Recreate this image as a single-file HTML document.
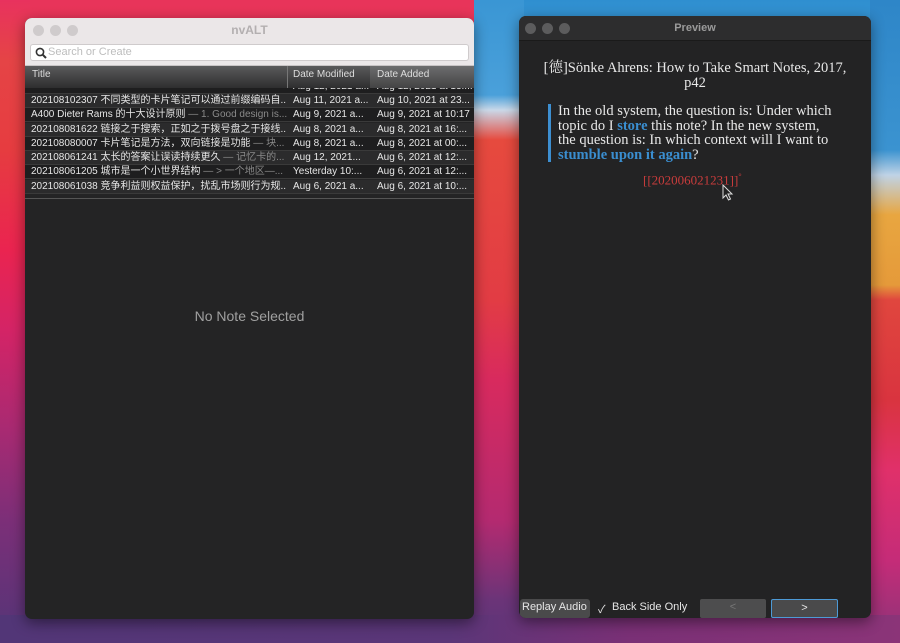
<!DOCTYPE html>
<html><head><meta charset="utf-8"><style>
*{margin:0;padding:0;box-sizing:border-box}
body{width:900px;height:643px;overflow:hidden;position:relative;font-family:"Liberation Sans","Noto Sans CJK SC",sans-serif;background:linear-gradient(180deg,#e8345a 0%,#e53d4a 25%,#e2265a 45%,#b52a6e 65%,#7a3277 82%,#4e3577 100%)}
.bg{position:absolute}
.win{position:absolute;border-radius:7px;overflow:hidden;box-shadow:0 4px 14px rgba(0,0,0,.45)}
.dots span{position:absolute;top:7px;width:11px;height:11px;border-radius:50%}
</style></head><body>
<div class="bg" style="left:474px;top:0;width:426px;height:110px;background:linear-gradient(180deg,#2f8fd0,#4aa3dc)"></div>
<div class="bg" style="left:474px;top:0;width:50px;height:643px;background:linear-gradient(180deg,#3a96d4 0,#4aa0da 95px,#c9d8e8 110px,#e64a3e 140px,#e23c44 300px,#d82a5e 380px,#b42a70 520px,#6b3478 600px,#5a3678 643px)"></div>
<div class="bg" style="left:870px;top:0;width:30px;height:643px;background:linear-gradient(180deg,#2e86c8 0,#3b93d0 150px,#bfd3e6 175px,#e8a640 215px,#e59a3a 285px,#e0463e 300px,#d9343f 400px,#e0306a 470px,#c52c78 560px,#8a3478 643px)"></div>
<div class="bg" style="left:0;top:0;width:30px;height:643px;background:linear-gradient(180deg,#e8325e 0,#e54446 60px,#e63c40 150px,#ea2450 250px,#d42466 330px,#a82a72 430px,#7c2f78 520px,#533577 643px)"></div>
<div class="bg" style="left:0;top:615px;width:900px;height:28px;background:linear-gradient(90deg,#523677,#5b3678 50%,#7a3076 70%,#8b3478)"></div>

<div class="win" style="left:25px;top:18px;width:449px;height:601px;background:#242425">
 <div style="height:48px;background:#ebe7e8;border-bottom:1px solid #c8c4c5;position:relative">
  <div class="dots"><span style="left:8px;background:#cfcbcc"></span><span style="left:25px;background:#cfcbcc"></span><span style="left:42px;background:#cfcbcc"></span></div>
  <div style="position:absolute;top:5px;width:100%;text-align:center;font-size:12px;font-weight:bold;color:#b3afb0">nvALT</div>
  <div style="position:absolute;left:5px;top:26px;width:439px;height:17px;background:#fff;border:1px solid #cfcbcc;border-radius:3px">
   <svg style="position:absolute;left:4px;top:2px" width="12" height="12" viewBox="0 0 12 12"><circle cx="5" cy="5" r="3.6" fill="none" stroke="#333" stroke-width="1.6"/><path d="M7.6 7.6L11 11" stroke="#333" stroke-width="2"/></svg>
   <span style="position:absolute;left:17px;top:1px;font-size:11px;color:#bdbdbd">Search or Create</span>
  </div>
 </div>
 <div style="position:relative;height:22px;background:linear-gradient(#5a5a5b,#2e2e2f);font-size:10px;color:#ddd">
  <span style="position:absolute;left:7px;top:3px">Title</span>
  <div style="position:absolute;left:262px;top:0;height:22px;border-left:1px solid #777"></div>
  <span style="position:absolute;left:268px;top:3px">Date Modified</span>
  <div style="position:absolute;left:345px;top:0;width:104px;height:22px;background:linear-gradient(#6d6d6e,#434344)"></div>
  <span style="position:absolute;left:352px;top:3px">Date Added</span>
 </div>
 <div id="rows" style="position:relative;height:112px;font-size:10px;color:#e6e6e6;white-space:nowrap;overflow:hidden"></div>
 <div style="border-top:1px solid #555;position:absolute;top:180px;left:0;width:449px"></div>
 <div style="position:absolute;top:290px;width:100%;text-align:center;font-size:14px;color:#a0a0a0">No Note Selected</div>
</div>

<div class="win" style="left:519px;top:16px;width:352px;height:602px;background:#232324">
 <div style="height:25px;background:#2d2d2e;border-bottom:1px solid #1a1a1a;position:relative">
  <div class="dots"><span style="left:6px;background:#5c5c5d"></span><span style="left:23px;background:#5c5c5d"></span><span style="left:40px;background:#5c5c5d"></span></div>
  <div style="position:absolute;top:6px;width:100%;text-align:center;font-size:11px;font-weight:bold;color:#9a9a9a">Preview</div>
 </div>
 <div style="font-family:'Liberation Serif','Noto Serif CJK SC',serif;color:#e8e8e8;font-size:14.5px">
  <div style="position:absolute;left:6px;top:45px;width:340px;text-align:center;line-height:15px;white-space:nowrap">[德]Sönke Ahrens: How to Take Smart Notes, 2017,<br>p42</div>
  <div style="position:absolute;left:29px;top:88px;width:3px;height:58px;background:#3d8fd1"></div>
  <div style="position:absolute;left:39px;top:88px;width:300px;line-height:14.5px;font-size:14.5px;white-space:nowrap">In the old system, the question is: Under which<br>topic do I <b style="color:#3a8ed0">store</b> this note? In the new system,<br>the question is: In which context will I want to<br><b style="color:#3a8ed0">stumble upon it again</b>?</div>
  <div style="position:absolute;left:124px;top:156px;color:#c93c3c;font-size:13px">[[202006021231]]<sup style="font-size:8px">°</sup></div>
  <svg style="position:absolute;left:203px;top:168px" width="12" height="17" viewBox="0 0 12 17"><path d="M1 1v13l3-3 2.5 5 2-1-2.5-5h4z" fill="#222" stroke="#ddd" stroke-width="1"/></svg>
 </div>
 <div style="position:absolute;top:583px;left:0;width:100%;height:19px;font-size:11px;color:#e6e6e6">
  <div style="position:absolute;left:1px;top:0;width:70px;height:19px;background:#4a4a4b;border-radius:3px;padding:2px 0 0 2px">Replay Audio</div>
  <span style="position:absolute;left:79px;top:2px">✓</span>
  <span style="position:absolute;left:93px;top:2px">Back Side Only</span>
  <div style="position:absolute;left:181px;top:0;width:66px;height:19px;background:#4d4d4e;border-radius:2px;text-align:center;color:#777;padding-top:2px">&lt;</div>
  <div style="position:absolute;left:252px;top:0;width:67px;height:19px;background:#4a4a4b;border:1px solid #4d9ad6;border-radius:2px;text-align:center;padding-top:2px">&gt;</div>
 </div>
</div>
<script>
var r=[["<span style='position:relative;top:-9px'>202108121000 给予的启示是一些好的想法 —</span>","Aug 12, 2021 a...","Aug 12, 2021 at 13:..."],
["202108102307 不同类型的卡片笔记可以通过前缀编码自...","Aug 11, 2021 a...","Aug 10, 2021 at 23..."],
["A400 Dieter Rams 的十大设计原则 <span style='color:#8a8a8a'>— 1. Good design is...</span>","Aug 9, 2021 a...","Aug 9, 2021 at 10:17"],
["202108081622 链接之于搜索，正如之于拨号盘之于接线...","Aug 8, 2021 a...","Aug 8, 2021 at 16:..."],
["202108080007 卡片笔记是方法，双向链接是功能 <span style='color:#8a8a8a'>— 块...</span>","Aug 8, 2021 a...","Aug 8, 2021 at 00:..."],
["202108061241 太长的答案让误读持续更久 <span style='color:#8a8a8a'>— 记忆卡的...</span>","Aug 12, 2021...","Aug 6, 2021 at 12:..."],
["202108061205 城市是一个小世界结构 <span style='color:#8a8a8a'>— &gt; 一个地区—...</span>","Yesterday  10:...","Aug 6, 2021 at 12:..."],
["202108061038 竞争利益则权益保护，扰乱市场则行为规...","Aug 6, 2021 a...","Aug 6, 2021 at 10:..."]];
var h="",tops=[-8,6,20,35,49,63,77,92];
for(var i=0;i<r.length;i++){var bg=i%2?"#2b2b2c":"#1e1e1f";
h+="<div style='position:absolute;left:0;top:"+tops[i]+"px;width:449px;height:14px;background:"+bg+";border-bottom:1px solid #3a3a3a;overflow:hidden;line-height:14px'><span style='position:absolute;left:6px;width:256px;overflow:hidden'>"+r[i][0]+"</span><span style='position:absolute;left:268px'>"+r[i][1]+"</span><span style='position:absolute;left:352px'>"+r[i][2]+"</span></div>";}
document.getElementById("rows").innerHTML=h;
</script>
</body></html>
